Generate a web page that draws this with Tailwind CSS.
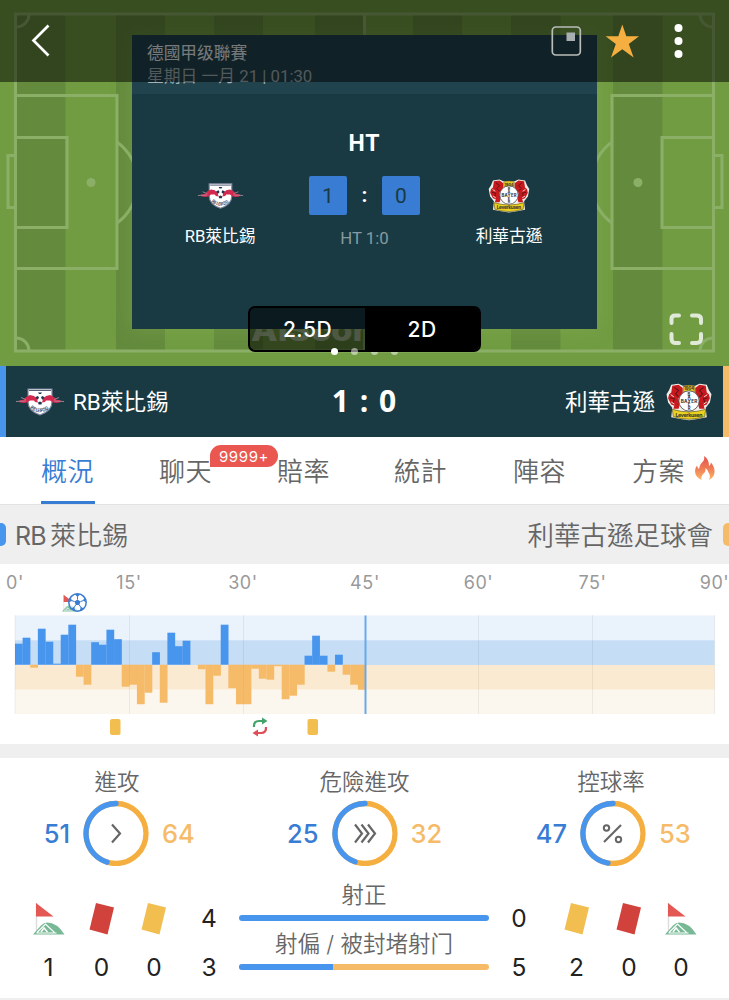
<!DOCTYPE html>
<html lang="zh-Hant">
<head>
    <meta charset="UTF-8">
    <meta name="viewport" content="width=device-width, initial-scale=1.0">
    <title>RB萊比錫 - 利華古遜</title>
    <script src="https://cdn.jsdelivr.net/npm/@tailwindcss/browser@4"></script>
</head>
<body class="w-[729px] h-[1000px] overflow-hidden bg-white font-['Inter','Noto_Sans_CJK_TC',sans-serif] text-[#666]">

    <!-- Shared icons -->
    <svg class="hidden">
        <symbol id="leipzig" viewBox="0 0 52 28">
            <path d="M14 1h24v13q0 9-12 13Q14 23 14 14z" fill="#fff" stroke="#7a8299" stroke-width="1.2"/>
            <path d="M15 2.500h22" stroke="#59637c" stroke-width="1"/>
            <path d="M24 4.500h4l-1 1.500h-2zM21.500 9l2.500-1 1 2-2 2-2-1zM30.500 9L28 8l-1 2 2 2 2-1zM24 14.500l2-1 2 1-.6 2h-2.800z" fill="#26324f"/>
            <path d="M5 12.500l5-1 2-2.500 4-2 4 1 3 3 1 3.500-3-.5-1-1.500-4 0-3 2-3 .5-4-.5zM47 12.500l-5-1-2-2.500-4-2-4 1-3 3-1 3.500 3-.5 1-1.500 4 0 3 2 3 .5 4-.5z" fill="#d4294f"/>
            <path d="M2 13.500l10-.5M50 13.500l-10-.5M7 9.500l5 2M45 9.500l-5 2" stroke="#b994a4" stroke-width=".8"/>
            <path id="arcL" d="M16 20q10 8.500 20 0" fill="none"/>
            <text font-size="5" font-weight="700" fill="#3b4664" font-family="Inter" textLength="21" lengthAdjust="spacingAndGlyphs"><textPath href="#arcL" textLength="21" lengthAdjust="spacingAndGlyphs">RB LEIPZIG</textPath></text>
        </symbol>
        <symbol id="leverkusen" viewBox="0 0 44 36">
            <path d="M5 1.500l7-1 4 2h12l4-2 7 1 2 5 2.500 4-1.500 8-4 5 1 9-10 2-7 1-7-1-10-2 1-9-4-5-1.500-8 2.500-4z" fill="#f1eee9"/>
            <path d="M6 2.500l6-1 4 3v5l-4 5 1 7-1 3-5 0 1-3-3-1-3-6 1-4 2-1.500zM38 2.500l-6-1-4 3v5l4 5-1 7 1 3 5 0-1-3 3-1 3-6-1-4-2-1.500z" fill="#c8191e"/>
            <path d="M8 4l4 3-3 3 3 3M36 4l-4 3 3 3-3 3M4 14l4 1-1 3M40 14l-4 1 1 3" stroke="#5e1515" stroke-width="1" fill="none"/>
            <path d="M4.500 11l3 2M39.500 11l-3 2M5 18l3 2M39 18l-3 2" stroke="#f1eee9" stroke-width=".9"/>
            <path d="M16.500 3q5.500-2 11 0v5h-11z" fill="#e5c520" stroke="#6d5d18" stroke-width=".5"/>
            <circle cx="22" cy="17" r="9.700" fill="#fff" stroke="#4a4a4a" stroke-width=".8"/>
            <path d="M6 25q16 5 32 0l-1 7q-15 5-30 0z" fill="#ead21e" stroke="#574b13" stroke-width=".6"/>
            <g font-family="Inter" font-weight="700" fill="#333" text-anchor="middle">
                <text x="22" y="7" font-size="4">1904</text>
                <text x="22" y="18.600" font-size="4.500" textLength="16">BAYER</text>
                <text x="22" y="11.800" font-size="4">B</text>
                <text x="22" y="15" font-size="4">A</text>
                <text x="22" y="22.200" font-size="4">E</text>
                <text x="22" y="25.600" font-size="4">R</text>
                <text x="22" y="32" font-size="5" textLength="26">Leverkusen</text>
            </g>
        </symbol>
        <symbol id="corner" viewBox="0 0 32 33">
            <path d="M3.500 1v29" stroke="#ddd" stroke-width="1.500"/>
            <path d="M3 1l17.500 13.500H3z" fill="#e35852"/>
            <path d="M0 32.500L8 23.500q3-3 6-3 10 0 17.500 12z" fill="#78b995"/>
            <path d="M3.500 31h20M4 30.500L12.500 22l9 8.500" fill="none" stroke="#fff" stroke-width="1.100"/>
            <path d="M8 30l3-4 3.500 4" fill="none" stroke="#fff" stroke-width="1.500"/>
        </symbol>
        <symbol id="card" viewBox="0 0 26 33">
            <path d="M7 1l18 4.500-6.500 27L.5 27.500z" fill="currentColor"/>
        </symbol>
    </svg>

    <!-- Live pitch -->
    <section class="relative h-[366px] overflow-hidden bg-[#719c42]">
        <svg class="absolute inset-0" width="729" height="366" viewBox="0 0 729 366">
            <g fill="#648b3d">
                <path d="M16 15h49.500v335H16zM116 15h49v335h-49zM214 15h49v335h-49zM315 15h49.500v335H315zM413 15h49v335h-49zM511 15h49.500v335H511zM613 15h49.500v335H613z"/>
            </g>
            <g fill="none" stroke="#8caf68" stroke-width="3">
                <path d="M15.500 14h698v337h-698zM364.500 14v337"/>
                <path d="M17 95.500h100v173H17M17 137.500h50v90H17M14 155.500H8v52h6"/>
                <path d="M117 142a50 50 0 0 1 0 81M17 27a13 13 0 0 0 12-12M17 338a13 13 0 0 1 12 12"/>
                <path d="M712 95.500H612v173h100M712 137.500h-50v90h50M715 155.500h7v52h-7"/>
                <path d="M612 142a50 50 0 0 0 0 81M712 27a13 13 0 0 1-12-12M712 338a13 13 0 0 0-12 12"/>
            </g>
            <circle cx="91" cy="182.500" r="4.500" fill="#8caf68"/>
            <circle cx="638" cy="182.500" r="4.500" fill="#8caf68"/>
            <text x="251" y="341" font-size="31" font-weight="800" fill="#fff" opacity=".5" font-family="Inter" textLength="136" lengthAdjust="spacingAndGlyphs">AiScore</text>
        </svg>

        <!-- Score card -->
        <div class="absolute left-[132px] top-[35px] w-[465px] h-[294px] bg-[#193a43] shadow-[0_0_18px_rgba(140,180,90,0.35)] font-['Roboto','Noto_Sans_CJK_TC',sans-serif]">
            <div class="h-[59px] bg-[#20434e] pl-[15px] pt-[7px] text-[16.700px] leading-[23px] text-[#eef3f4]">
                <div>德國甲级聯賽</div>
                <div class="text-[#a3b2b6] text-[16.800px]">星期日 一月 21 | 01:30</div>
            </div>
            <div class="mt-[35px] text-center text-[23px] leading-[30px] font-bold text-white tracking-[1px]">HT</div>
            <div class="mt-[17px] flex justify-between text-white">
                <div class="w-[176px] flex flex-col items-center">
                    <svg class="mt-[6px] w-[49px] h-[28px]"><use href="#leipzig"/></svg>
                    <div class="mt-[15px] text-[16.700px] leading-[24px]">RB萊比錫</div>
                </div>
                <div class="flex flex-col items-center">
                    <div class="flex items-center text-[21px] text-[#193a43]">
                        <div class="w-[38px] h-[39px] rounded-[2px] bg-[#397cd3] text-center leading-[40px]">1</div>
                        <div class="w-[35px] text-center text-white font-bold">:</div>
                        <div class="w-[38px] h-[39px] rounded-[2px] bg-[#397cd3] text-center leading-[40px]">0</div>
                    </div>
                    <div class="mt-[11px] text-[16.800px] leading-[24px] text-[#869a9f]">HT 1:0</div>
                </div>
                <div class="w-[176px] flex flex-col items-center">
                    <svg class="mt-[3px] w-[42px] h-[34px]"><use href="#leverkusen"/></svg>
                    <div class="mt-[12px] text-[16.700px] leading-[24px]">利華古遜</div>
                </div>
            </div>
        </div>

        <!-- Top bar -->
        <header class="absolute inset-x-0 top-0 h-[82px] bg-black/50">
            <svg width="729" height="82" viewBox="0 0 729 82">
                <path d="M48.500 25.500L33.500 40.500L48.500 55.500" fill="none" stroke="#fff" stroke-width="2.700"/>
                <rect x="552.300" y="27" width="28" height="28" rx="3.500" fill="none" stroke="#b9bdb9" stroke-width="1.700"/>
                <path d="M566.500 32.500h8.500v8.500h-8.500z" fill="#a9aeb0"/>
                <path d="M622.300 24.500l4 11.800h12.700l-10.200 7.700 4.800 13.500-11.300-8.200-11.300 8.200 4.800-13.500-10.200-7.700h12.700z" fill="#f5ae40"/>
                <g fill="#fff"><circle cx="678.500" cy="28" r="4"/><circle cx="678.500" cy="41" r="4"/><circle cx="678.500" cy="54" r="4"/></g>
            </svg>
        </header>

        <!-- View switch -->
        <div class="absolute left-[248px] top-[306px] w-[233px] h-[46px] flex rounded-[7px] border-2 border-black bg-black/55 overflow-hidden text-white text-[21px] font-medium leading-[43px] text-center tracking-[0.500px]">
            <div class="w-[115px]">2.5D</div>
            <div class="flex-1 bg-black">2D</div>
        </div>
        <div class="absolute left-[331px] top-[348px] flex gap-[13px]">
            <i class="w-[7px] h-[7px] rounded-full bg-white"></i>
            <i class="w-[7px] h-[7px] rounded-full bg-white/50"></i>
            <i class="w-[7px] h-[7px] rounded-full bg-white/50 [clip-path:inset(4px_0_0_0)]"></i>
            <i class="w-[7px] h-[7px] rounded-full bg-white/50 [clip-path:inset(4px_0_0_0)]"></i>
        </div>
        <svg class="absolute left-[668px] top-[312px]" width="36" height="34" viewBox="0 0 36 34" fill="none" stroke="#e0e9d8" stroke-width="4" stroke-linecap="round">
            <path d="M11 3.500H7Q3.500 3.500 3.500 7v4M24 3.500h4.500Q33 3.500 33 7v4M3.500 22v4.500Q3.500 31 7 31h4M33 22v4.500Q33 31 28.500 31H24"/>
        </svg>
    </section>

    <!-- Scoreboard strip -->
    <section class="h-[71px] flex items-center bg-[#193a43] border-l-6 border-l-[#4895ee] border-r-6 border-r-[#f5bb69] text-white text-[22.500px] font-['Roboto','Noto_Sans_CJK_TC',sans-serif]">
        <svg class="ml-[8px] w-[52px] h-[30px] mt-[1px]"><use href="#leipzig"/></svg>
        <div class="ml-[7px] w-[240px] pt-[2px]">RB萊比錫</div>
        <div class="w-[92px] text-center font-['Open_Sans'] font-bold text-[30px] leading-[36px] whitespace-nowrap ml-[5px] mt-[-2px] [word-spacing:3px]">1 : 0</div>
        <div class="flex-1 text-right pt-[2px]">利華古遜</div>
        <svg class="ml-[11px] mr-[11px] w-[46px] h-[38px] mt-[1px]"><use href="#leverkusen"/></svg>
    </section>

    <!-- Tabs -->
    <nav class="h-[68px] flex border-b border-[#e3e3e3] pl-[41px] text-[26px] leading-[69px] font-[350] tracking-[0.500px]">
        <a class="w-[54px] h-[67px] border-b-[3px] border-[#397cd3] text-[#397cd3] whitespace-nowrap">概況</a>
        <a class="relative ml-[64px] w-[54px]">聊天
            <span class="absolute left-[51px] top-[8px] w-[68px] h-[22px] rounded-full rounded-bl-none bg-[#ea5650] text-white text-[15px] leading-[23px] font-normal text-center tracking-[0.600px]">9999+</span>
        </a>
        <a class="ml-[64px] w-[54px]">賠率</a>
        <a class="ml-[63px] w-[54px]">統計</a>
        <a class="ml-[65px] w-[54px]">陣容</a>
        <a class="ml-[65px] w-[54px]">方案</a>
        <svg class="ml-[8px] mt-[18px]" width="22" height="26" viewBox="0 0 22 26">
            <defs><linearGradient id="fire" x1="0" y1="0" x2="0" y2="1"><stop offset="0" stop-color="#e6514a"/><stop offset=".5" stop-color="#ef7a55"/><stop offset="1" stop-color="#fbb765"/></linearGradient></defs>
            <path d="M10 1q5 3 5 10 1.500-1 2-3.500 4 5 3.500 10Q20 22.500 15 25q2-4-.5-7.500Q14 15 11.500 13q.5 4-2.500 6-2 2-1.500 6Q1 22 1 16q0-3 2-5.500.5 2.500 2 3.500Q6 9 8.500 7 11 4.500 10 1z" fill="url(#fire)"/>
        </svg>
    </nav>

    <!-- Team names -->
    <section class="h-[59px] flex items-center justify-between bg-[#efefef] text-[26.500px] font-[350]">
        <div class="flex items-center"><i class="w-[6px] h-[23px] rounded-r-[5px] bg-[#4895ee] mr-[9px]"></i><span class="text-[26px] pt-[2px] [word-spacing:-2px]"><span class="text-[25px] font-normal tracking-[-0.800px]">RB </span>萊比錫</span></div>
        <div class="flex items-center"><span class="pt-[2px]">利華古遜足球會</span><i class="w-[6px] h-[23px] rounded-l-[5px] bg-[#f5bb69] ml-[10px]"></i></div>
    </section>

    <!-- Attack momentum -->
    <section class="h-[180px]">
        <svg width="729" height="180" viewBox="0 564 729 180">
            <g font-size="18" fill="#999" text-anchor="middle" letter-spacing=".6" font-family="Inter">
                <text x="15" y="588.500">0'</text>
                <text x="129" y="588.500">15'</text>
                <text x="243" y="588.500">30'</text>
                <text x="365" y="588.500">45'</text>
                <text x="478.500" y="588.500">60'</text>
                <text x="592.500" y="588.500">75'</text>
                <text x="714.500" y="588.500">90'</text>
            </g>
            <path d="M15 615.500h699.500v25H15z" fill="#eaf2fc"/>
            <path d="M15 640.300h699.500v24.700H15z" fill="#c6ddf6"/>
            <path d="M15 665h699.500v24.700H15z" fill="#fbead2"/>
            <path d="M15 689.700h699.500v24.300H15z" fill="#fbf6ee"/>
            <g id="bars"></g>
            <path d="M15 615v99M129.500 615v99M243.500 615v99M478.500 615v99M592.500 615v99M714.500 615v99" stroke="#000" stroke-opacity=".06"/>
            <path d="M365.500 615.500V714" stroke="#69a8ea" stroke-width="2"/>
            <!-- Match events -->
            <svg x="62" y="594" width="17" height="18"><use href="#corner"/></svg>
            <g transform="translate(77.500 602.500)">
                <circle r="8.700" fill="#fff" fill-opacity=".75" stroke="#397cd3" stroke-width="1.500"/>
                <path d="M0-3l3 2-1.200 3.500h-3.600L-3-1z" fill="#397cd3"/>
                <path d="M0-3v-3M3-1l3-1M1.800 2.500l2 3M-1.800 2.500l-2 3M-3-1l-3-1" stroke="#397cd3"/>
                <path d="M-3-8.500h6L0-5.500zM7-5l1.700 5L5.500-2zM6.500 6L2 8.500l1.500-4zM-6.500 6L-2 8.500l-1.500-4zM-7-5l-1.700 5L-5.500-2z" fill="#397cd3"/>
            </g>
            <rect x="110" y="719" width="10.500" height="16" rx="2" fill="#f2be50"/>
            <rect x="307.500" y="719" width="10.500" height="16" rx="2" fill="#f2be50"/>
            <path d="M254 727q-.5-6 5-6h4" fill="none" stroke="#43a368" stroke-width="2.200"/>
            <path d="M262 717.500l5.500 3.500-5.500 3.500z" fill="#43a368"/>
            <path d="M266 727q.5 6-5 6h-4" fill="none" stroke="#df4d56" stroke-width="2.200"/>
            <path d="M258 729.500l-5.500 3.500 5.500 3.500z" fill="#df4d56"/>
        </svg>
    </section>

    <div class="h-[14px] bg-[#efefef]"></div>

    <!-- Stats -->
    <section class="h-[240px]">
        <div class="h-[112px] flex justify-between px-[20px] text-[25.500px] text-center">
            <div class="w-[192px] pt-[8px]">
                <div class="text-[22.500px] leading-[32px] font-[350] pl-[2px]">進攻</div>
                <div class="flex items-center justify-center mt-[2px]">
                    <span class="w-[40px] text-right text-[#397cd3] font-medium mr-[13px] pt-[2px]">51</span>
                    <svg width="66" height="66" viewBox="0 0 66 66" fill="none">
                        <circle cx="33" cy="33.500" r="30" stroke="#f5ae40" stroke-width="5.300"/>
                        <path d="M33 3.500A30 30 0 0 0 24 62.100" stroke="#4895ee" stroke-width="5.300" stroke-linecap="round"/>
                        <path d="M29 24.500l8 9-8 9" stroke="#666" stroke-width="2.200"/>
                    </svg>
                    <span class="w-[40px] text-left text-[#f5bb69] font-medium ml-[13px] pt-[2px]">64</span>
                </div>
            </div>
            <div class="w-[192px] pt-[8px]">
                <div class="text-[22.500px] leading-[32px] font-[350]">危險進攻</div>
                <div class="flex items-center justify-center mt-[2px]">
                    <span class="w-[40px] text-right text-[#397cd3] font-medium mr-[13px] pt-[2px]">25</span>
                    <svg width="66" height="66" viewBox="0 0 66 66" fill="none">
                        <circle cx="33" cy="33.500" r="30" stroke="#f5ae40" stroke-width="5.300"/>
                        <path d="M33 3.500A30 30 0 0 0 23 61.800" stroke="#4895ee" stroke-width="5.300" stroke-linecap="round"/>
                        <path d="M23 24.500l7 9-7 9M29.500 24.500l7 9-7 9M36 24.500l7 9-7 9" stroke="#666" stroke-width="2.200"/>
                    </svg>
                    <span class="w-[40px] text-left text-[#f5bb69] font-medium ml-[13px] pt-[2px]">32</span>
                </div>
            </div>
            <div class="w-[192px] pt-[8px]">
                <div class="text-[22.500px] leading-[32px] font-[350] pr-[4px]">控球率</div>
                <div class="flex items-center justify-center mt-[2px]">
                    <span class="w-[40px] text-right text-[#397cd3] font-medium mr-[13px] pt-[2px]">47</span>
                    <svg width="66" height="66" viewBox="0 0 66 66" fill="none">
                        <circle cx="33" cy="33.500" r="30" stroke="#f5ae40" stroke-width="5.300"/>
                        <path d="M33 3.500A30 30 0 0 0 28 63.100" stroke="#4895ee" stroke-width="5.300" stroke-linecap="round"/>
                        <path d="M41 25L24 42" stroke="#666" stroke-width="2.200"/>
                        <circle cx="26.500" cy="28" r="2.700" stroke="#666" stroke-width="2"/>
                        <circle cx="38.500" cy="39.500" r="2.700" stroke="#666" stroke-width="2"/>
                    </svg>
                    <span class="w-[40px] text-left text-[#f5bb69] font-medium ml-[13px] pt-[2px]">53</span>
                </div>
            </div>
        </div>

        <div class="h-[128px] flex px-[22px] text-[24.500px] leading-[30px] text-[#222] text-center">
            <div class="flex pt-[32px]">
                <div class="w-[53px] flex flex-col items-center"><svg class="w-[32px] h-[33px]"><use href="#corner"/></svg><span class="mt-[17px]">1</span></div>
                <div class="w-[53px] flex flex-col items-center text-[#d0423b]"><svg class="w-[26px] h-[33px]"><use href="#card"/></svg><span class="mt-[17px] text-[#222]">0</span></div>
                <div class="w-[52px] flex flex-col items-center text-[#f2be50]"><svg class="w-[26px] h-[33px]"><use href="#card"/></svg><span class="mt-[17px] text-[#222]">0</span></div>
            </div>
            <div class="flex-1 flex flex-col pl-[14px] pt-[7px]">
                <div class="flex h-[49px]">
                    <span class="w-[30px] mt-[26px]">4</span>
                    <div class="w-[250px] ml-[15px] mr-[15px] pt-[2px]">
                        <div class="text-[22.500px] leading-[32px] font-[350] text-[#666]">射正</div>
                        <div class="mt-[4px] h-[6px] rounded-full bg-[#4895ee]"></div>
                    </div>
                    <span class="w-[30px] mt-[26px]">0</span>
                </div>
                <div class="flex h-[49px]">
                    <span class="w-[30px] mt-[26px]">3</span>
                    <div class="w-[250px] ml-[15px] mr-[15px] pt-[2px]">
                        <div class="text-[22.500px] leading-[32px] font-[350] text-[#666] whitespace-nowrap">射偏 / 被封堵射门</div>
                        <div class="mt-[4px] h-[6px] rounded-full bg-[#f5bb69] overflow-hidden"><div class="w-[94px] h-full bg-[#4895ee]"></div></div>
                    </div>
                    <span class="w-[30px] mt-[26px]">5</span>
                </div>
            </div>
            <div class="flex pt-[32px]">
                <div class="w-[53px] flex flex-col items-center text-[#f2be50]"><svg class="w-[26px] h-[33px]"><use href="#card"/></svg><span class="mt-[17px] text-[#222]">2</span></div>
                <div class="w-[52px] flex flex-col items-center text-[#d0423b]"><svg class="w-[26px] h-[33px]"><use href="#card"/></svg><span class="mt-[17px] text-[#222]">0</span></div>
                <div class="w-[52px] flex flex-col items-center"><svg class="w-[32px] h-[33px]"><use href="#corner"/></svg><span class="mt-[17px]">0</span></div>
            </div>
        </div>
    </section>
    <div class="h-[2px] bg-[#efefef]"></div>

    <script>
        // Momentum per minute, positive = home, negative = away
        const momentum = [21, 27, -3, 36, 23, 1, 30, 40, -12, -20, 22.5, 20, 35, 25.5, -22, -20, -39.5, -28, 12.5, -38, 32, 18.5, 24, 0, -4.5, -39.5, -11, 40, -23.5, -39.5, -39.5, -4, -14, -15, -1.5, -34.5, -31, -20, 9, 29, 9, -7, 10, -10, -20, -25];
        const step = 350.5 / momentum.length;
        document.getElementById("bars").innerHTML = momentum.map((v, i) =>
            `<rect x="${15 + i * step}" y="${v > 0 ? 664.7 - v : 664.7}" width="${step + 0.15}" height="${Math.abs(v)}" fill="${v > 0 ? "#4895ee" : "#f5bb69"}"/>`
        ).join("");
    </script>
</body>
</html>
